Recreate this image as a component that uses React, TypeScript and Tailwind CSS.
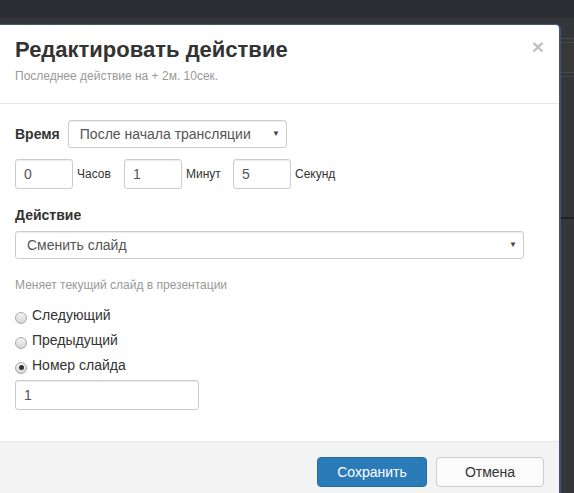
import React from 'react';

function Select({ value, width }: { value: string; width: string }) {
  return (
    <div
      className={`flex h-[28px] ${width} items-center justify-between rounded-[3px] border border-[#ccc] bg-white pl-[11px] pr-[6px] text-[14px] text-[#555] shadow-[inset_0_1px_1px_rgba(0,0,0,0.075)]`}
    >
      <span>{value}</span>
      <span className="text-[8px] text-[#444]">▼</span>
    </div>
  );
}

function TextInput({ value, width }: { value: string; width: string }) {
  return (
    <div
      className={`flex h-[30px] ${width} items-center rounded-[3px] border border-[#ccc] bg-white px-[8px] text-[14px] text-[#555] shadow-[inset_0_1px_1px_rgba(0,0,0,0.075)]`}
    >
      {value}
    </div>
  );
}

function Radio({ label, checked }: { label: string; checked?: boolean }) {
  return (
    <div className="flex h-[20px] items-center">
      <span className="mt-[5px] mr-[5px] flex h-[12px] w-[12px] items-center justify-center rounded-full border border-[#a9a9a9] bg-gradient-to-b from-[#f4f4f4] to-[#d6d6d6]">
        {checked && <span className="h-[5px] w-[5px] rounded-full bg-[#333]" />}
      </span>
      <span className="text-[14px] text-[#333]">{label}</span>
    </div>
  );
}

export default function App() {
  return (
    <div className="relative h-[493px] w-[574px] overflow-hidden bg-[#343639] font-['Liberation_Sans',Arial,sans-serif]">
      {/* page behind the modal */}
      <div className="flex h-full flex-col">
        <div className="h-[18px] bg-[#2a2d31]" />
        <div className="flex flex-1">
          <div className="flex-1" />
          <div className="flex w-[13px] flex-col">
            <div className="h-[20px]" />
            <div className="h-[1px] bg-[#4a4a4a]" />
            <div className="h-[3px]" />
            <div className="h-[1px] bg-[#4a4a4a]" />
            <div className="h-[29px] bg-[#383838]" />
            <div className="h-[1px] bg-[#4a4a4a]" />
            <div className="h-[3px]" />
            <div className="h-[1px] bg-[#444]" />
            <div className="h-[140px]" />
            <div className="h-[2px] bg-[#222]" />
          </div>
        </div>
      </div>

      {/* modal window */}
      <div className="absolute left-0 top-[24px] w-[561px] rounded-tr-[5px] border-t border-r-2 border-[#3f5478] bg-white">
        <div className="flex items-start justify-between border-b border-[#e5e5e5] px-[15px] pt-[13px] pb-[18px]">
          <div>
            <h4 className="text-[22px] leading-[24px] font-bold text-[#333]">Редактировать действие</h4>
            <p className="mt-[6px] text-[12px] leading-[17px] text-[#999]">Последнее действие на + 2м. 10сек.</p>
          </div>
          <span className="mt-[-2px] text-[21px] leading-none font-bold text-[#c2c2c2]">×</span>
        </div>

        <div className="px-[15px] pt-[16px] pb-[31px] text-[#333]">
          <div className="flex items-center">
            <span className="mr-[8px] text-[14px] font-bold">Время</span>
            <Select value="После начала трансляции" width="w-[219px]" />
          </div>

          <div className="mt-[11px] flex">
            {[
              ['0', 'Часов'],
              ['1', 'Минут'],
              ['5', 'Секунд'],
            ].map(([v, l]) => (
              <div key={l} className="flex w-[109px] items-center">
                <TextInput value={v} width="w-[58px]" />
                <span className="ml-[4px] text-[12px] text-[#333]">{l}</span>
              </div>
            ))}
          </div>

          <div className="mt-[16px] text-[14px] leading-[20px] font-bold">Действие</div>
          <div className="mt-[6px]">
            <Select value="Сменить слайд" width="w-[509px]" />
          </div>

          <p className="mt-[18px] text-[12px] leading-[17px] text-[#999]">Меняет текущий слайд в презентации</p>

          <div className="mt-[11px] flex flex-col gap-[5px]">
            <Radio label="Следующий" />
            <Radio label="Предыдущий" />
            <Radio label="Номер слайда" checked />
          </div>

          <div className="mt-[5px]">
            <TextInput value="1" width="w-[184px]" />
          </div>
        </div>

        <div className="flex justify-end gap-[9px] border-t border-[#e5e5e5] bg-[#f3f3f3] px-[15px] pt-[15px] pb-[15px]">
          <button className="h-[30px] w-[110px] rounded-[4px] border border-[#2a6aa3] bg-[#2c7bb9] text-[14px] text-white">
            Сохранить
          </button>
          <button className="h-[30px] w-[108px] rounded-[4px] border border-[#ccc] bg-[#fbfbfb] text-[14px] text-[#333]">
            Отмена
          </button>
        </div>
      </div>
    </div>
  );
}
